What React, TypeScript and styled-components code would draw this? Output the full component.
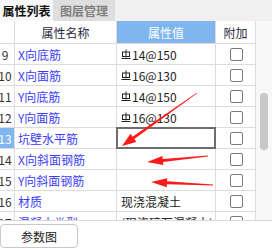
import React from "react";
import styled, { createGlobalStyle } from "styled-components";

const GlobalStyle = createGlobalStyle`
  html, body { margin: 0; padding: 0; background: #fff; }
  body { font-family: "Noto Sans CJK SC", "Noto Sans", sans-serif; }
`;

const Page = styled.div`
  width: 272px;
  height: 252px;
  position: relative;
  overflow: hidden;
  display: flex;
  flex-direction: column;
  background: #fff;
`;

const TabBar = styled.div`
  height: 21px;
  flex: none;
  display: flex;
  background: #f0f0f0;
`;

const Tab = styled.div<{ $active?: boolean }>`
  display: flex;
  align-items: center;
  justify-content: center;
  width: ${(p) => (p.$active ? 53 : 62)}px;
  background: ${(p) => (p.$active ? "#f8f8f8" : "#dedede")};
  color: ${(p) => (p.$active ? "#111" : "#808080")};
  font-size: 12px;
  font-weight: 700;
`;

const GridArea = styled.div`
  height: 200px;
  flex: none;
  display: flex;
  box-sizing: border-box;
  border-bottom: 1px solid #d9d9d9;
  overflow: hidden;
`;

const Table = styled.div`
  width: 256px;
  flex: none;
  display: grid;
  grid-template-columns: 15px 102px 99px 40px;
  grid-template-rows: 23px;
  grid-auto-rows: 21px;
  align-content: start;
`;

const Cell = styled.div`
  box-sizing: border-box;
  border-right: 1px solid #dcdcdc;
  border-bottom: 1px solid #dcdcdc;
  display: flex;
  align-items: center;
  overflow: hidden;
  white-space: nowrap;
  font-size: 12px;
  position: relative;
`;

const HeadCell = styled(Cell)<{ $blue?: boolean }>`
  justify-content: center;
  background: ${(p) => (p.$blue ? "#80b6ee" : "#fff")};
  color: ${(p) => (p.$blue ? "#fff" : "#2a2a3a")};
`;

const NumCell = styled(Cell)<{ $selected?: boolean }>`
  justify-content: center;
  padding-right: 4px;
  background: ${(p) => (p.$selected ? "#80b6ee" : "#fff")};
  color: ${(p) => (p.$selected ? "#fff" : "#333")};
`;

const NameCell = styled(Cell)`
  padding-left: 3px;
  color: #3d3dfa;
`;

const ValueCell = styled(Cell)<{ $focused?: boolean }>`
  padding-left: 4px;
  color: #222;
  gap: 1px;
  overflow: visible;
  &::after {
    content: "";
    display: ${(p) => (p.$focused ? "block" : "none")};
    position: absolute;
    left: -1px;
    top: -1px;
    right: -1px;
    bottom: -1px;
    border: 2px solid #6e6e6e;
    pointer-events: none;
  }
`;

const CheckCell = styled(Cell)`
  justify-content: center;
`;

const CheckBox = styled.span`
  width: 13px;
  height: 13px;
  box-sizing: border-box;
  border: 1px solid #7a7a7a;
  border-radius: 2px;
  background: #fff;
  margin-left: 1px;
`;

const ScrollTrack = styled.div`
  width: 16px;
  flex: none;
  background: #f8f8f8;
  padding-top: 72px;
  box-sizing: border-box;
`;

const Thumb = styled.div`
  width: 8px;
  height: 57px;
  margin-left: 4px;
  border-radius: 4px;
  background: #c8c8c8;
`;

const Footer = styled.div`
  padding-top: 3px;
  display: flex;
`;

const Button = styled.button`
  width: 78px;
  height: 24px;
  box-sizing: border-box;
  border: 1px solid #c8c8c8;
  border-radius: 4px;
  background: #fff;
  color: #222;
  font-family: inherit;
  font-size: 12px;
  padding: 0;
`;

const Overlay = styled.svg`
  position: absolute;
  left: 0;
  top: 0;
  pointer-events: none;
`;

const RebarSymbol = () => (
  <svg width="10" height="11" viewBox="0 0 10 11" style={{ flex: "none" }}>
    <line x1="5" y1="0.5" x2="5" y2="8.5" stroke="#222" strokeWidth="1" />
    <rect x="1.5" y="3" width="7" height="4.5" fill="none" stroke="#222" strokeWidth="1" />
    <line x1="0.5" y1="9.5" x2="9.5" y2="9.5" stroke="#222" strokeWidth="1" />
  </svg>
);

type Row = { n: number; name: string; value?: string; rebar?: boolean };

const rows: Row[] = [
  { n: 9, name: "X向底筋", value: "14@150", rebar: true },
  { n: 10, name: "X向面筋", value: "16@130", rebar: true },
  { n: 11, name: "Y向底筋", value: "14@150", rebar: true },
  { n: 12, name: "Y向面筋", value: "16@130", rebar: true },
  { n: 13, name: "坑壁水平筋" },
  { n: 14, name: "X向斜面钢筋" },
  { n: 15, name: "Y向斜面钢筋" },
  { n: 16, name: "材质", value: "现浇混凝土" },
  { n: 17, name: "混凝土类型", value: "(现浇碎石混凝土)" },
];

const SELECTED = 13;

export default function App() {
  return (
    <Page>
      <GlobalStyle />
      <TabBar>
        <Tab $active>属性列表</Tab>
        <Tab>图层管理</Tab>
      </TabBar>
      <GridArea>
        <Table>
          <HeadCell />
          <HeadCell>属性名称</HeadCell>
          <HeadCell $blue>属性值</HeadCell>
          <HeadCell>附加</HeadCell>
          {rows.map((r) => (
            <React.Fragment key={r.n}>
              <NumCell $selected={r.n === SELECTED}>{r.n}</NumCell>
              <NameCell>{r.name}</NameCell>
              <ValueCell $focused={r.n === SELECTED}>
                {r.rebar && <RebarSymbol />}
                {r.value}
              </ValueCell>
              <CheckCell>
                <CheckBox />
              </CheckCell>
            </React.Fragment>
          ))}
        </Table>
        <ScrollTrack>
          <Thumb />
        </ScrollTrack>
      </GridArea>
      <Footer>
        <Button>参数图</Button>
      </Footer>
      <Overlay width="272" height="252" viewBox="0 0 272 252">
        <polygon
          fill="#ff1a1a"
          points="197.2,93.3 134.3,139.1 136.3,142 122,146 130.5,133.8 132.5,136.7 196.8,92.7"
        />
        <polygon
          fill="#ff1a1a"
          points="208,156.4 163,161.9 163.3,164.9 147,162 162.5,155.9 162.8,158.9 208,155.6"
        />
        <polygon
          fill="#ff1a1a"
          points="213,185.4 166.9,184.3 166.8,187.3 151,182 167.2,178.3 167.1,181.3 213,184.6"
        />
      </Overlay>
    </Page>
  );
}
